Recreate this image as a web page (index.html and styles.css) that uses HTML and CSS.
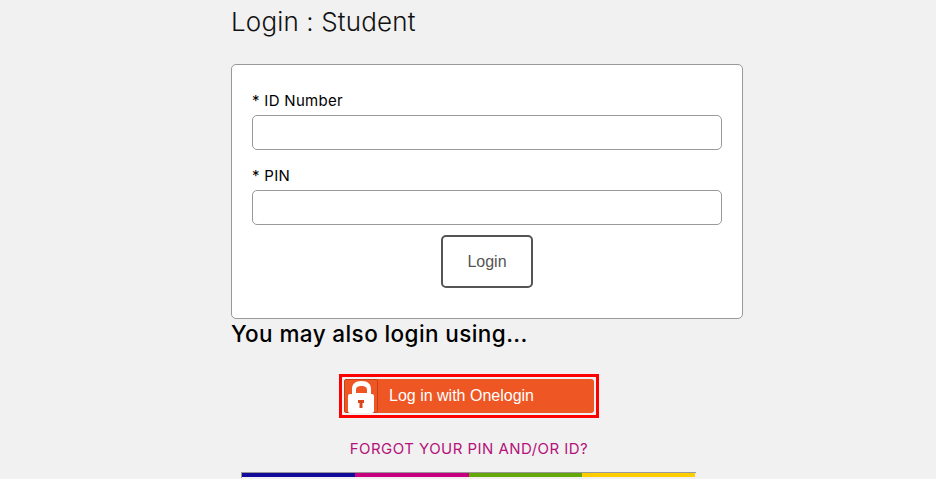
FILE: index.html
```html
<!doctype html>
<html>
<head>
<meta charset="utf-8">
<title>Login : Student</title>
<link rel="stylesheet" href="styles.css">
</head>

<body>
<div class="wrap">
	<h1>Login : Student</h1>
	<form class="card">
		<label for="idnum">* ID Number</label>
		<input type="text" id="idnum">
		<label for="pin" class="second">* PIN</label>
		<input type="text" id="pin">
		<div class="btnrow"><button type="button" class="login">Login</button></div>
	</form>
	<h2>You may also login using...</h2>
	<div class="lower">
		<div class="ssorow">
			<a href="javascript:;" class="sso">
				<span class="lock">
					<svg width="26" height="32" viewBox="0 0 26 32">
						<path fill="#fff" fill-rule="evenodd" d="M4 13V8C4 3 7 0 13.500 0S23 3 23 8V13H24Q26 13 26 15V30Q26 32 24 32H2Q0 32 0 30V15Q0 13 2 13ZM8 12H19V9C19 6 17 5 13.500 5S8 6 8 9Z"/>
						<path fill="#d9481c" d="M10 19H16V22H14.500V27H11.500V22H10Z"/>
					</svg>
				</span>
				<span class="ssotext">Log in with Onelogin</span>
			</a>
		</div>
		<a href="javascript:;" class="forgot">FORGOT YOUR PIN AND/OR ID?</a>
		<ul class="stripe">
			<li class="blue"></li>
			<li class="pink"></li>
			<li class="green"></li>
			<li class="yellow"></li>
		</ul>
	</div>
</div>
</body>
</html>
```

FILE: styles.css
```css
*{margin:0; padding:0; list-style:none; box-sizing:border-box;}
html,body{height:479px; overflow:hidden;}
body{background:#f1f1f1; font-family:"Inter","Noto Sans",sans-serif; color:#000;}
.wrap{width:512px; margin-left:231px;}
h1{font-size:26px; font-weight:300; line-height:32px; padding-top:6px; height:64px; letter-spacing:.15px; color:#111;}
.card{height:255px; background:#fff; border:1px solid #999; border-radius:5px; padding:26px 20px 0;}
.card label{display:block; font-size:15px; line-height:20px; font-weight:400; letter-spacing:.3px;}
.card label.second{margin-top:16px;}
.card input{display:block; width:470px; height:35px; margin-top:4px; border:1px solid #999; border-radius:5px; background:#fff;}
.btnrow{display:flex; justify-content:center; margin-top:10px;}
.login{width:92px; height:53px; background:#fff; border:2px solid #555; border-radius:5px; font-family:"Liberation Sans",sans-serif; font-size:16px; color:#555;}
h2{font-size:22.500px; line-height:30px; font-weight:500; letter-spacing:.4px;}
.lower{width:476px;}
.ssorow{display:flex; justify-content:center; margin-top:25px;}
.sso{display:flex; width:260px; height:44px; border:3px solid #f00; padding:2px; text-decoration:none; background:#f1f1f1;}
.lock{width:34px; flex:none; height:34px; padding-top:1px; background:#ee5624; border:1px solid #c8401a; border-radius:2px 0 0 2px; display:flex; justify-content:center;}
.ssotext{flex:1; background:#ee5624; color:#fff; font-family:"Liberation Sans",sans-serif; font-size:16px; line-height:34px; padding-left:11px; border-radius:0 3px 3px 0;}
.forgot{display:block; text-align:center; margin-top:21px; font-size:15px; line-height:20px; letter-spacing:.46px; color:#b5127a; text-decoration:none;}
.stripe{display:flex; width:455px; height:6px; margin:13px 0 0 10px; padding-right:1px; border-top:1px solid #999; border-left:1px solid #999;}
.stripe li{flex:1; height:4px;}
.blue{background:#120a9b;}
.pink{background:#c8007f;}
.green{background:#64a70b;}
.yellow{background:#ffcd00;}
```
